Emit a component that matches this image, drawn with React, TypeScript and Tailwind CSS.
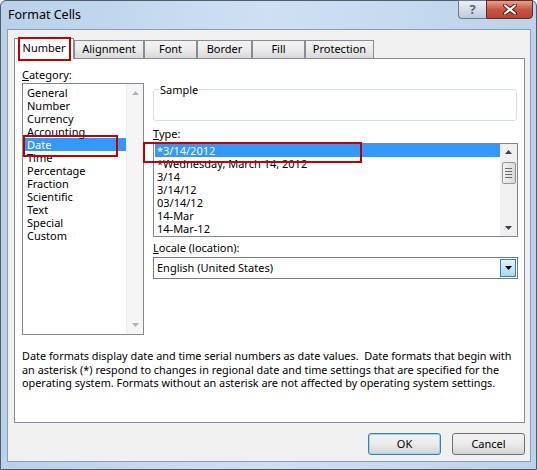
const categories = [
  'General',
  'Number',
  'Currency',
  'Accounting',
  'Date',
  'Time',
  'Percentage',
  'Fraction',
  'Scientific',
  'Text',
  'Special',
  'Custom',
];

const types = [
  '*3/14/2012',
  '*Wednesday, March 14, 2012',
  '3/14',
  '3/14/12',
  '03/14/12',
  '14-Mar',
  '14-Mar-12',
];

const tabs = [
  { label: 'Number', width: 'w-[60px]', active: true },
  { label: 'Alignment', width: 'w-[70px]' },
  { label: 'Font', width: 'w-[53px]' },
  { label: 'Border', width: 'w-[55px]' },
  { label: 'Fill', width: 'w-[53px]' },
  { label: 'Protection', width: 'w-[69px]' },
];

function Arrow({ up, color }: { up?: boolean; color: string }) {
  return (
    <svg width="7" height="4" viewBox="0 0 7 4">
      <path d={up ? 'M0 4 L3.5 0 L7 4 Z' : 'M0 0 L7 0 L3.5 4 Z'} fill={color} />
    </svg>
  );
}

export default function App() {
  return (
    <div className="relative h-[470px] w-[537px] overflow-hidden bg-white font-['Noto_Sans',sans-serif] text-[11px] text-black">
      {/* window frame */}
      <div className="flex h-[470px] w-[537px] flex-col rounded-t-[6px] border border-[#4f5c6b] bg-gradient-to-r from-[#b9d1ea] via-[#cfe0f3] to-[#bcd3ec] pl-[6px] pr-[5px] pb-[7px]">
        {/* title bar */}
        <div className="flex h-[28px] items-start justify-between">
          <div className="pl-[1px] pt-[5px] text-[12.5px] leading-[17px]">Format Cells</div>
          <div className="-mr-[2px] -mt-px flex">
            <div className="flex h-[19px] w-[28px] items-center justify-center rounded-bl-[4px] border border-r-0 border-[#6d7a89] bg-gradient-to-b from-[#eaf0f7] to-[#bccbdd] text-[13px] font-bold leading-none text-[#5a6878]">
              ?
            </div>
            <div className="flex h-[19px] w-[47px] items-center justify-center rounded-br-[4px] border border-[#5e2b26] bg-gradient-to-b from-[#e6a08f] via-[#c75545] to-[#b9432f]">
              <svg width="14" height="11" viewBox="0 0 14 11">
                <path d="M2 1.5 L12 9.5 M12 1.5 L2 9.5" stroke="#4a1c17" strokeWidth="4" strokeLinecap="round" />
                <path d="M2 1.5 L12 9.5 M12 1.5 L2 9.5" stroke="#ffffff" strokeWidth="2.2" strokeLinecap="round" />
              </svg>
            </div>
          </div>
        </div>

        {/* client area */}
        <div className="flex flex-1 flex-col border border-[#8d9db1] bg-[#f0f0f0] pt-[8px] pl-[6px] pr-[5px]">
          {/* tabs */}
          <div className="relative z-10 -mb-px flex h-[21px] items-end">
            {tabs.map((t) =>
              t.active ? (
                <div
                  key={t.label}
                  className={`${t.width} flex h-[21px] items-center justify-center border border-b-0 border-[#898c95] bg-white pb-[1px]`}
                >
                  {t.label}
                </div>
              ) : (
                <div
                  key={t.label}
                  className={`${t.width} flex h-[19px] items-center justify-center border border-[#898c95] bg-gradient-to-b from-[#f3f3f3] via-[#ebebeb] to-[#d9d9d9]`}
                >
                  {t.label}
                </div>
              ),
            )}
          </div>

          {/* panel */}
          <div className="flex h-[365px] w-[511px] flex-col border border-[#898c95] bg-white pl-[7px] pt-[7px]">
            <div className="flex">
              {/* category */}
              <div className="flex flex-col">
                <div className="h-[17px] leading-[17px]">
                  <span className="underline">C</span>ategory:
                </div>
                <div className="flex h-[252px] w-[122px] border border-[#828790] bg-white">
                  <div className="flex-1 pl-[1px] pt-[2px]">
                    {categories.map((c) => (
                      <div
                        key={c}
                        className={`h-[13px] pl-[3px] leading-[13px] ${c === 'Date' ? 'bg-[#3399ff] text-white' : ''}`}
                      >
                        {c}
                      </div>
                    ))}
                  </div>
                  <div className="flex w-[17px] flex-col items-center justify-between border-l border-[#ececec] bg-[#f5f5f5] py-[7px]">
                    <Arrow up color="#b3b3b3" />
                    <Arrow color="#b3b3b3" />
                  </div>
                </div>
              </div>

              {/* right column */}
              <div className="ml-[9px] flex w-[365px] flex-col">
                <div className="relative mt-[23px] h-[32px] w-[364px] rounded-[3px] border border-[#d5dfe5]">
                  <span className="absolute -top-[7px] left-[5px] bg-white px-[1px] leading-[13px]">Sample</span>
                </div>

                <div className="mt-[4px] h-[17px] leading-[17px]">
                  <span className="underline">T</span>ype:
                </div>
                <div className="mt-[1px] flex h-[94px] border border-[#828790] bg-white">
                  <div className="flex-1 pl-[1px]">
                    {types.map((t, i) => (
                      <div
                        key={t}
                        className={`h-[13px] pl-[2px] leading-[13px] ${i === 0 ? 'bg-[#3399ff] text-white' : ''}`}
                      >
                        {t}
                      </div>
                    ))}
                  </div>
                  <div className="flex w-[17px] flex-col items-center bg-[#f0f0f0] pt-[6px]">
                    <Arrow up color="#404040" />
                    <div className="mt-[8px] flex h-[22px] w-[14px] flex-col items-center justify-center gap-[2px] rounded-[2px] border border-[#959595] bg-gradient-to-r from-[#f4f4f4] to-[#d8d8d8]">
                      <div className="h-px w-[7px] bg-[#6b6b6b]" />
                      <div className="h-px w-[7px] bg-[#6b6b6b]" />
                      <div className="h-px w-[7px] bg-[#6b6b6b]" />
                      <div className="h-px w-[7px] bg-[#6b6b6b]" />
                    </div>
                    <div className="flex-1" />
                    <div className="pb-[6px]">
                      <Arrow color="#404040" />
                    </div>
                  </div>
                </div>

                <div className="mt-[2px] h-[17px] leading-[17px]">
                  <span className="underline">L</span>ocale (location):
                </div>
                <div className="mt-[1px] flex h-[22px] items-stretch border border-[#7a7a7a] bg-white">
                  <div className="flex flex-1 items-center pl-[3px]">English (United States)</div>
                  <div className="m-[1px] flex w-[16px] items-center justify-center border border-[#3c7fb1] bg-gradient-to-b from-[#e5f4fc] to-[#a7d9f5]">
                    <Arrow color="#000000" />
                  </div>
                </div>
              </div>
            </div>

            <div className="mt-[14px] whitespace-nowrap text-[10.87px] leading-[13.5px]">
              <div>Date formats display date and time serial numbers as date values.&nbsp; Date formats that begin with</div>
              <div>an asterisk (*) respond to changes in regional date and time settings that are specified for the</div>
              <div>operating system. Formats without an asterisk are not affected by operating system settings.</div>
            </div>
          </div>

          {/* buttons */}
          <div className="mt-[10px] flex w-[511px] justify-end gap-[11px]">
            <div className="flex h-[22px] w-[73px] items-center justify-center rounded-[3px] border border-[#3c7fb1] bg-gradient-to-b from-[#f2f2f2] via-[#ebebeb] to-[#d4d4d4] shadow-[inset_0_0_0_1px_#9cd3f0]">
              OK
            </div>
            <div className="flex h-[22px] w-[73px] items-center justify-center rounded-[3px] border border-[#707070] bg-gradient-to-b from-[#f2f2f2] via-[#ebebeb] to-[#d4d4d4]">
              Cancel
            </div>
          </div>
        </div>
      </div>

      {/* red annotation boxes */}
      <div className="absolute left-[18px] top-[37px] z-20 h-[24px] w-[53px] border-2 border-[#c00000]" />
      <div className="absolute left-[23px] top-[135px] z-20 h-[22px] w-[95px] border-2 border-[#c00000]" />
      <div className="absolute left-[143px] top-[142px] z-20 h-[21px] w-[219px] border-2 border-[#c00000]" />
    </div>
  );
}
